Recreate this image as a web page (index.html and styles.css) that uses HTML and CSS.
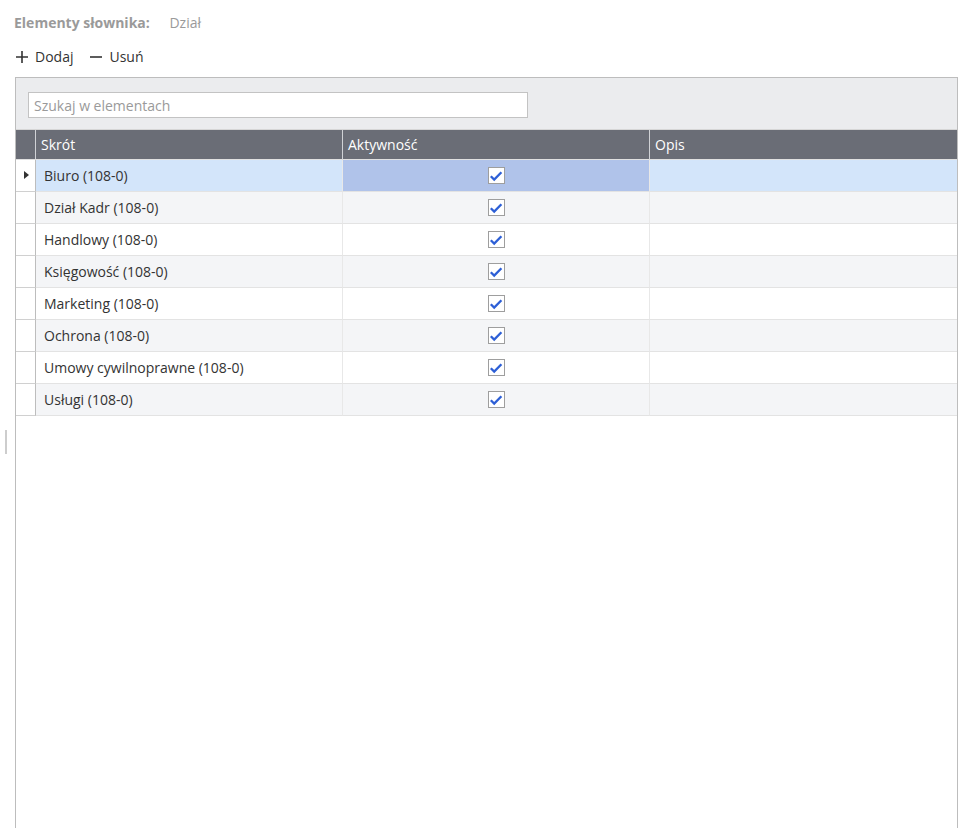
FILE: index.html
```html
<!DOCTYPE html>
<html lang="pl">
<head>
  <meta charset="UTF-8" />
  <meta name="viewport" content="width=device-width, initial-scale=1.0" />
  <title>Elementy słownika</title>
  <link rel="stylesheet" href="styles.css">
</head>
<body>
  <div class="title">
    <span class="title-label">Elementy słownika:</span>
    <span class="title-value">Dział</span>
  </div>

  <div class="toolbar">
    <span class="tool">
      <svg width="14" height="14" viewBox="0 0 14 14"><path d="M7 1v12M1 7h12" stroke="#333" stroke-width="1.6" fill="none"/></svg>
      Dodaj
    </span>
    <span class="tool">
      <svg width="14" height="14" viewBox="0 0 14 14"><path d="M1 7h12" stroke="#333" stroke-width="1.6" fill="none"/></svg>
      Usuń
    </span>
  </div>

  <div class="main">
    <div class="splitter"><div class="grip"></div></div>

    <div class="panel">
      <div class="search-bar">
        <input class="search" type="text" placeholder="Szukaj w elementach">
      </div>

      <div class="grid">
        <div class="head ind"></div>
        <div class="head">Skrót</div>
        <div class="head">Aktywność</div>
        <div class="head last">Opis</div>
      </div>

      <div id="rows"></div>
    </div>
  </div>

  <script>
    const items = [
      'Biuro (108-0)',
      'Dział Kadr (108-0)',
      'Handlowy (108-0)',
      'Księgowość (108-0)',
      'Marketing (108-0)',
      'Ochrona (108-0)',
      'Umowy cywilnoprawne (108-0)',
      'Usługi (108-0)'
    ];

    const check = '<span class="check"><svg width="14" height="14" viewBox="0 0 14 14">' +
      '<path d="M1.8 7.2l3.4 3.4L12.4 3.2" stroke="#2d5fd6" stroke-width="2.3" fill="none"/></svg></span>';

    const rows = document.getElementById('rows');
    items.forEach(function (name, i) {
      const row = document.createElement('div');
      row.className = 'grid row' + (i % 2 ? ' alt' : '') + (i === 0 ? ' selected' : '');
      row.innerHTML =
        '<div class="cell ind">' + (i === 0 ? '<span class="arrow"></span>' : '') + '</div>' +
        '<div class="cell name">' + name + '</div>' +
        '<div class="cell active">' + check + '</div>' +
        '<div class="cell last"></div>';
      rows.appendChild(row);
    });
  </script>
</body>
</html>
```

FILE: styles.css
```css
body {
  margin: 0;
  font-family: "Open Sans", "Noto Sans", sans-serif;
  font-size: 14px;
  color: #333;
  background: #fff;
  overflow: hidden;
}
.title {
  padding: 12px 0 0 14px;
  height: 24px;
  line-height: 22px;
  font-size: 14px;
}
.title-label {
  font-weight: bold;
  color: #9a9a9a;
  margin-right: 16px;
}
.title-value {
  color: #9a9a9a;
}
.toolbar {
  display: flex;
  gap: 16px;
  padding: 9px 0 0 15px;
  height: 32px;
  box-sizing: border-box;
  line-height: 22px;
}
.tool {
  display: flex;
  align-items: center;
  gap: 6px;
  cursor: pointer;
}
.main {
  display: flex;
  height: 752px;
  margin-top: 9px;
}
.splitter {
  width: 15px;
}
.grip {
  width: 2px;
  height: 24px;
  margin: 353px 0 0 5px;
  background: #cdcdcd;
}
.panel {
  width: 941px;
  border: 1px solid #bdbdbd;
  border-bottom: none;
}
.search-bar {
  background: #ebecee;
  height: 52px;
  padding: 14px 0 0 12px;
  box-sizing: border-box;
  border-bottom: 1px solid #d6d6d6;
}
.search {
  width: 500px;
  height: 26px;
  box-sizing: border-box;
  border: 1px solid #c3c3c3;
  padding: 0 5px;
  font-family: inherit;
  font-size: 14px;
  outline: none;
}
.search::placeholder {
  color: #9a9a9a;
}
.grid {
  display: grid;
  grid-template-columns: 20px 307px 307px 1fr;
}
.head {
  background: #6a6d76;
  color: #fff;
  height: 29px;
  line-height: 30px;
  padding-left: 5px;
  border-right: 1px solid #d0d2d6;
  border-bottom: 1px solid #e0e0e0;
}
.head.ind {
  padding: 0;
}
.head.last,
.cell.last {
  border-right: none;
}
.cell {
  height: 31px;
  line-height: 31px;
  border-right: 1px solid #e8e8e8;
  border-bottom: 1px solid #e3e3e3;
}
.row {
  background: #fff;
}
.row.alt {
  background: #f4f5f7;
}
.row.selected {
  background: #d3e5fa;
}
.row.selected .active {
  background: #b0c3ea;
}
.cell.ind {
  background: #fff;
  border-right: 1px solid #bdbdbd;
  border-bottom: 1px solid #d0d0d0;
  position: relative;
}
.arrow {
  position: absolute;
  left: 8px;
  top: 11px;
  border-left: 5px solid #333;
  border-top: 4px solid transparent;
  border-bottom: 4px solid transparent;
}
.name {
  padding-left: 8px;
}
.active {
  display: flex;
  align-items: center;
  justify-content: center;
}
.check {
  width: 17px;
  height: 17px;
  box-sizing: border-box;
  border: 1px solid #9e9e9e;
  background: #fff;
  display: flex;
  align-items: center;
  justify-content: center;
}
```
